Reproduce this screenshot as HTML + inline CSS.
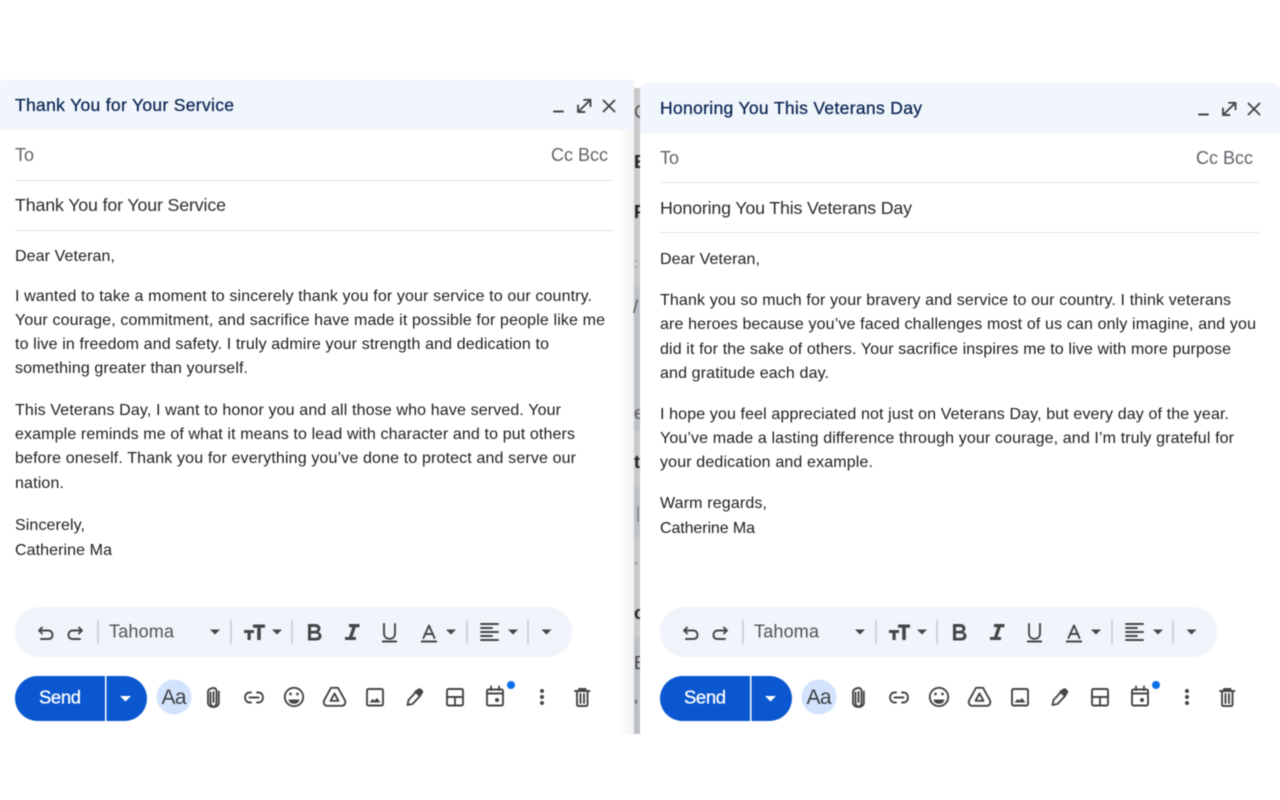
<!DOCTYPE html>
<html lang="en">
<head>
<meta charset="utf-8">
<title>Veterans Day Emails</title>
<style>
html,body{margin:0;padding:0;width:1280px;height:800px;overflow:hidden;background:#fff}
svg{display:block;filter:blur(.45px)}
text{font-family:"Liberation Sans",sans-serif}
.b{font-size:16px;fill:#1d1e1f}
.t{font-size:17.500px;fill:#0a2552;stroke:#0a2552;stroke-width:.25px}
.g{font-size:18px;fill:#5f6368}
.s{font-size:17.800px;fill:#2a2b2d}
.i{fill:none;stroke:#444746;stroke-width:1.900;stroke-linecap:round;stroke-linejoin:round}
.f{fill:#444746;stroke:none}
.l{stroke:#e2e3e4;stroke-width:1}
.d{stroke:#c7c9cc;stroke-width:1.500}
.x{font-size:18px;fill:#222;font-weight:bold}
</style>
</head>
<body>
<svg width="1280" height="800" viewBox="0 0 1280 800" xmlns="http://www.w3.org/2000/svg">
<defs>
<linearGradient id="sh" x1="0" x2="1" y1="0" y2="0"><stop offset="0" stop-color="#fff"/><stop offset="1" stop-color="#f1f1f1"/></linearGradient>
<g id="hd">
<path class="i" d="M554 111.500H563" stroke-width="2.400" stroke-linecap="butt"/>
<path class="i" d="M584 99.800H590.500V106.300M590 100.300L578.500 111.500M578 105.500V112H584.500" stroke-linecap="butt" stroke-width="2.200"/>
<path class="i" d="M603.500 100.500L614.500 111.500M614.500 100.500L603.500 111.500" stroke-width="2.400" stroke-linecap="butt"/>
</g>
<g id="tb">
<rect x="15" y="607" width="557" height="50" rx="25" fill="#f1f4fb"/>
<path class="i" d="M42 627.500L39 630.500L42 633.500M39.500 630.500H48C51 630.500 52.500 632.500 52.500 635S51 639 48 639H41" stroke-width="1.600"/>
<path class="i" d="M79 627.500L82 630.500L79 633.500M81.500 630.500H73C70 630.500 68.500 632.500 68.500 635S70 639 73 639H80" stroke-width="1.600"/>
<path class="d" d="M98 620V644M231 620V644M292 620V644M467 620V644M528 620V644"/>
<path class="f" d="M210 629.500H220L215 634.500ZM272 629.500H282L277 634.500ZM446 629.500H456L451 634.500ZM508 629.500H518L513 634.500ZM541.500 629.500H551.500L546.500 634.500Z"/>
<path class="f" d="M244 630H254V633H250.700V640H247.500V633H244ZM253 624.500H265V627.800H260.800V640H257.200V627.800H253Z"/>
<path class="f" fill-rule="evenodd" d="M308 624H315C318.500 624 320.500 626 320.500 628.500C320.500 630.300 319.500 631.500 318.200 632C320.100 632.500 321.500 634 321.500 636C321.500 638.800 319.500 640.500 316 640.500H308ZM311 627V630.800H314.500C316.500 630.800 317.500 630 317.500 628.900S316.500 627 314.500 627ZM311 633.500V637.700H315.500C317.500 637.700 318.500 636.900 318.500 635.600S317.500 633.500 315.500 633.500Z"/>
<path class="f" d="M349 624H359.500V627.200H355.800L352.500 637H356V640H345V637H349L352.300 627.200H349Z"/>
<path class="i" d="M384 624V633C384 637 386.500 638.800 389.500 638.800S395 637 395 633V624" stroke-linecap="butt"/>
<path class="f" d="M382 640.500H397V642.500H382ZM421 642.500H437V640.500H421Z"/>
<path class="i" d="M423.500 638L429 625.500L434.500 638M425 634H433" stroke-linecap="butt"/>
<path class="i" d="M481 624H498M481 628H492M481 632H498M481 636H492M481 640H498" stroke-width="1.800" stroke-linecap="butt"/>
<path d="M37.500 676H105V721H37.500A22.500 22.500 0 0 1 15 698.500A22.500 22.500 0 0 1 37.500 676Z" fill="#0b57d0"/>
<path d="M106.500 676H124.500A22.500 22.500 0 0 1 147 698.500A22.500 22.500 0 0 1 124.500 721H106.500Z" fill="#0b57d0"/>
<path d="M120 696H131L125.500 701.500Z" fill="#fff"/>
<circle cx="174" cy="697" r="17.500" fill="#d3e3fd"/>
<path class="i" d="M210.500 692.500V702C210.500 705 211.500 706.500 213.500 706.500S216.500 705 216.500 702V691.500C216.500 689.300 215.500 688 213.500 688S208 689.300 208 692V702.500M218.800 691.500V702.500C218.800 705.500 216.500 707 213.500 707S208 705.500 208 702.500M213.500 692V702" stroke-width="1.500"/>
<path class="i" d="M251 692.500H249.500C246.800 692.500 245 694.800 245 697.500S246.800 702.500 249.500 702.500H251M257 692.500H258.500C261.300 692.500 263 694.800 263 697.500S261.300 702.500 258.500 702.500H257M249.500 697.500H258.500"/>
<circle class="i" cx="294" cy="697" r="9.200"/>
<circle class="f" cx="290.500" cy="694" r="1.400"/>
<circle class="f" cx="297.500" cy="694" r="1.400"/>
<path class="f" d="M288.500 699.500H299.500C299 702.500 297 703.800 294 703.800S289 702.500 288.500 699.500Z"/>
<path class="i" d="M331 687.800H338L344.800 700C346 702.500 344.800 705.800 342 705.800H327C324.300 705.800 323 702.500 324.300 700Z" stroke-width="2.200"/>
<path class="i" d="M334.500 693.500L330.500 700.800H338.500Z"/>
<rect class="i" x="367" y="689" width="16" height="16.500" rx="1.500"/>
<path class="f" d="M369.500 702.500L372.500 699L374.500 700.500L377 698L380.500 702.500Z"/>
<path class="i" d="M407.500 705L408.500 700L416 692L420 696L412.500 704Z" stroke-width="2.200"/>
<path class="f" d="M414 691.500L418.500 688.500C419.500 688 420.500 688.200 421.500 689.200L422.500 690.200C423.500 691.200 423.500 692.500 422.500 693.500L420 697.500Z"/>
<rect class="i" x="447" y="689" width="16" height="16.500" rx="1.500"/>
<path class="i" d="M447 697H463M455 697V705.500" stroke-linecap="butt"/>
<rect class="i" x="487" y="689.500" width="16" height="16" rx="1.500"/>
<path class="i" d="M487 693.500H503M491 686.500V690M499 686.500V690" stroke-linecap="butt"/>
<circle class="f" cx="497" cy="700" r="2"/>
<circle cx="511" cy="685" r="4" fill="#0b6fe8"/>
<circle class="f" cx="542" cy="691" r="2"/><circle class="f" cx="542" cy="697" r="2"/><circle class="f" cx="542" cy="703" r="2"/>
<path class="i" d="M575 691H589.500M579 691V689H585.500V691M577 691V704.500C577 705.500 577.500 706 578.500 706H586C587 706 587.500 705.500 587.500 704.500V691M580.500 694V703M584 694V703" stroke-linecap="butt"/>
</g>
</defs>

<rect x="620" y="88" width="14" height="647" fill="url(#sh)"/>

<!-- left window -->
<rect x="0" y="80" width="634" height="50" fill="#f1f5fc"/>
<text class="t" x="15" y="111" textLength="219">Thank You for Your Service</text>
<use href="#hd"/>
<text class="g" x="15" y="161" textLength="19">To</text>
<text class="g" x="551" y="161" textLength="57">Cc Bcc</text>
<path class="l" d="M15 180.500H614M15 230.500H614"/>
<text class="s" x="15" y="211" textLength="211">Thank You for Your Service</text>
<text class="b" x="15" y="261" textLength="100">Dear Veteran,</text>
<text class="b" x="15" y="301" textLength="577">I wanted to take a moment to sincerely thank you for your service to our country.</text>
<text class="b" x="15" y="325" textLength="590">Your courage, commitment, and sacrifice have made it possible for people like me</text>
<text class="b" x="15" y="349" textLength="534">to live in freedom and safety. I truly admire your strength and dedication to</text>
<text class="b" x="15" y="373" textLength="233">something greater than yourself.</text>
<text class="b" x="15" y="415" textLength="546">This Veterans Day, I want to honor you and all those who have served. Your</text>
<text class="b" x="15" y="439" textLength="560">example reminds me of what it means to lead with character and to put others</text>
<text class="b" x="15" y="463" textLength="561">before oneself. Thank you for everything you’ve done to protect and serve our</text>
<text class="b" x="15" y="488" textLength="49">nation.</text>
<text class="b" x="15" y="530" textLength="70">Sincerely,</text>
<text class="b" x="15" y="555" textLength="97">Catherine Ma</text>
<use href="#tb"/>
<text x="109" y="637.500" font-size="18" fill="#505355" textLength="65">Tahoma</text>
<text x="39" y="703.500" font-size="18.500" fill="#fff" stroke="#fff" stroke-width=".3" textLength="42">Send</text>
<text x="161.500" y="704" font-size="21" fill="#3c3f41" textLength="25">Aa</text>

<!-- strip between windows -->
<rect x="634" y="88" width="6" height="646" fill="#c9c9c9"/>
<rect x="634" y="287" width="6" height="143" fill="#bcc0c6"/>
<rect x="634" y="487" width="6" height="50" fill="#bcc0c6"/>
<rect x="634" y="637" width="6" height="97" fill="#bcc0c6"/>
<text class="x" x="634" y="168">E</text>
<text class="x" x="634" y="218">F</text>
<text x="634" y="118" font-size="18" fill="#555">C</text>
<text x="634" y="268" font-size="15" fill="#888">:</text>
<text x="633" y="313" font-size="18" fill="#555">/</text>
<text x="634" y="419" font-size="18" fill="#555">e</text>
<text class="x" x="634" y="468">t</text>
<text x="636" y="518" font-size="16" fill="#777">|</text>
<text x="634" y="564" font-size="14" fill="#555">.</text>
<text class="x" x="634" y="619">c</text>
<text x="634" y="669" font-size="18" fill="#444">E</text>
<text x="634" y="713" font-size="18" fill="#444">’</text>

<!-- right window -->
<path d="M640 91A8 8 0 0 1 648 83H1272A8 8 0 0 1 1280 91V735H640Z" fill="#fff"/>
<path d="M640 91A8 8 0 0 1 648 83H1272A8 8 0 0 1 1280 91V133H640Z" fill="#f1f5fc"/>
<text class="t" x="660" y="114" textLength="262">Honoring You This Veterans Day</text>
<use href="#hd" x="645" y="3"/>
<text class="g" x="660" y="164" textLength="19">To</text>
<text class="g" x="1196" y="164" textLength="57">Cc Bcc</text>
<path class="l" d="M660 182.500H1259M660 232.500H1259"/>
<text class="s" x="660" y="214" textLength="252">Honoring You This Veterans Day</text>
<text class="b" x="660" y="264" textLength="100">Dear Veteran,</text>
<text class="b" x="660" y="305" textLength="571">Thank you so much for your bravery and service to our country. I think veterans</text>
<text class="b" x="660" y="329" textLength="596">are heroes because you’ve faced challenges most of us can only imagine, and you</text>
<text class="b" x="660" y="354" textLength="571">did it for the sake of others. Your sacrifice inspires me to live with more purpose</text>
<text class="b" x="660" y="378" textLength="169">and gratitude each day.</text>
<text class="b" x="660" y="419" textLength="569">I hope you feel appreciated not just on Veterans Day, but every day of the year.</text>
<text class="b" x="660" y="443" textLength="574">You’ve made a lasting difference through your courage, and I’m truly grateful for</text>
<text class="b" x="660" y="467" textLength="213">your dedication and example.</text>
<text class="b" x="660" y="508" textLength="107">Warm regards,</text>
<text class="b" x="660" y="533" textLength="95">Catherine Ma</text>
<use href="#tb" x="645"/>
<text x="754" y="637.500" font-size="18" fill="#505355" textLength="65">Tahoma</text>
<text x="684" y="703.500" font-size="18.500" fill="#fff" stroke="#fff" stroke-width=".3" textLength="42">Send</text>
<text x="806.500" y="704" font-size="21" fill="#3c3f41" textLength="25">Aa</text>
</svg>
</body>
</html>
